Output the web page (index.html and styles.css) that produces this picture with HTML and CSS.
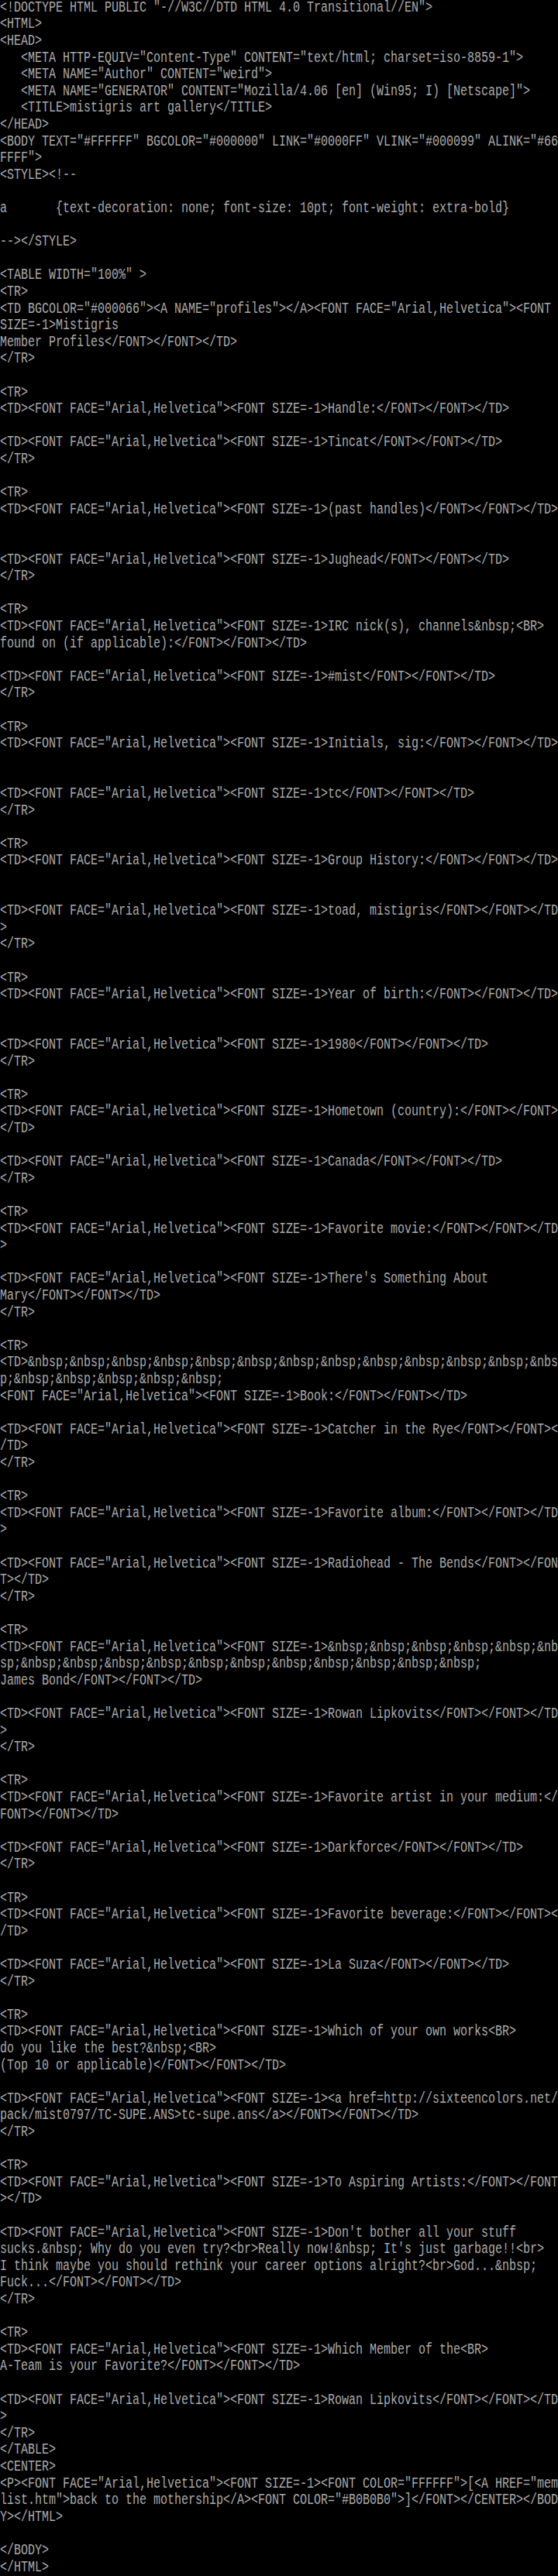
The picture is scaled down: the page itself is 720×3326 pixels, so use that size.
FILE: index.html
```html
<!DOCTYPE html>
<html lang="en">
<head>
  <meta charset="utf-8">
  <title>mistigris art gallery - source</title>
  <link rel="stylesheet" href="styles.css">
</head>
<body>
<!-- 80 colonnes x 154 lignes, comme l'écran texte d'origine -->
<div class="page">
<pre class="screen">
&lt;!DOCTYPE HTML PUBLIC "-//W3C//DTD HTML 4.0 Transitional//EN"&gt;
&lt;HTML&gt;
&lt;HEAD&gt;
   &lt;META HTTP-EQUIV="Content-Type" CONTENT="text/html; charset=iso-8859-1"&gt;
   &lt;META NAME="Author" CONTENT="weird"&gt;
   &lt;META NAME="GENERATOR" CONTENT="Mozilla/4.06 [en] (Win95; I) [Netscape]"&gt;
   &lt;TITLE&gt;mistigris art gallery&lt;/TITLE&gt;
&lt;/HEAD&gt;
&lt;BODY TEXT="#FFFFFF" BGCOLOR="#000000" LINK="#0000FF" VLINK="#000099" ALINK="#66
FFFF"&gt;
&lt;STYLE&gt;&lt;!--

a       {text-decoration: none; font-size: 10pt; font-weight: extra-bold}

--&gt;&lt;/STYLE&gt;

&lt;TABLE WIDTH="100%" &gt;
&lt;TR&gt;
&lt;TD BGCOLOR="#000066"&gt;&lt;A NAME="profiles"&gt;&lt;/A&gt;&lt;FONT FACE="Arial,Helvetica"&gt;&lt;FONT
SIZE=-1&gt;Mistigris
Member Profiles&lt;/FONT&gt;&lt;/FONT&gt;&lt;/TD&gt;
&lt;/TR&gt;

&lt;TR&gt;
&lt;TD&gt;&lt;FONT FACE="Arial,Helvetica"&gt;&lt;FONT SIZE=-1&gt;Handle:&lt;/FONT&gt;&lt;/FONT&gt;&lt;/TD&gt;

&lt;TD&gt;&lt;FONT FACE="Arial,Helvetica"&gt;&lt;FONT SIZE=-1&gt;Tincat&lt;/FONT&gt;&lt;/FONT&gt;&lt;/TD&gt;
&lt;/TR&gt;

&lt;TR&gt;
&lt;TD&gt;&lt;FONT FACE="Arial,Helvetica"&gt;&lt;FONT SIZE=-1&gt;(past handles)&lt;/FONT&gt;&lt;/FONT&gt;&lt;/TD&gt;


&lt;TD&gt;&lt;FONT FACE="Arial,Helvetica"&gt;&lt;FONT SIZE=-1&gt;Jughead&lt;/FONT&gt;&lt;/FONT&gt;&lt;/TD&gt;
&lt;/TR&gt;

&lt;TR&gt;
&lt;TD&gt;&lt;FONT FACE="Arial,Helvetica"&gt;&lt;FONT SIZE=-1&gt;IRC nick(s), channels&amp;nbsp;&lt;BR&gt;
found on (if applicable):&lt;/FONT&gt;&lt;/FONT&gt;&lt;/TD&gt;

&lt;TD&gt;&lt;FONT FACE="Arial,Helvetica"&gt;&lt;FONT SIZE=-1&gt;#mist&lt;/FONT&gt;&lt;/FONT&gt;&lt;/TD&gt;
&lt;/TR&gt;

&lt;TR&gt;
&lt;TD&gt;&lt;FONT FACE="Arial,Helvetica"&gt;&lt;FONT SIZE=-1&gt;Initials, sig:&lt;/FONT&gt;&lt;/FONT&gt;&lt;/TD&gt;


&lt;TD&gt;&lt;FONT FACE="Arial,Helvetica"&gt;&lt;FONT SIZE=-1&gt;tc&lt;/FONT&gt;&lt;/FONT&gt;&lt;/TD&gt;
&lt;/TR&gt;

&lt;TR&gt;
&lt;TD&gt;&lt;FONT FACE="Arial,Helvetica"&gt;&lt;FONT SIZE=-1&gt;Group History:&lt;/FONT&gt;&lt;/FONT&gt;&lt;/TD&gt;


&lt;TD&gt;&lt;FONT FACE="Arial,Helvetica"&gt;&lt;FONT SIZE=-1&gt;toad, mistigris&lt;/FONT&gt;&lt;/FONT&gt;&lt;/TD
&gt;
&lt;/TR&gt;

&lt;TR&gt;
&lt;TD&gt;&lt;FONT FACE="Arial,Helvetica"&gt;&lt;FONT SIZE=-1&gt;Year of birth:&lt;/FONT&gt;&lt;/FONT&gt;&lt;/TD&gt;


&lt;TD&gt;&lt;FONT FACE="Arial,Helvetica"&gt;&lt;FONT SIZE=-1&gt;1980&lt;/FONT&gt;&lt;/FONT&gt;&lt;/TD&gt;
&lt;/TR&gt;

&lt;TR&gt;
&lt;TD&gt;&lt;FONT FACE="Arial,Helvetica"&gt;&lt;FONT SIZE=-1&gt;Hometown (country):&lt;/FONT&gt;&lt;/FONT&gt;
&lt;/TD&gt;

&lt;TD&gt;&lt;FONT FACE="Arial,Helvetica"&gt;&lt;FONT SIZE=-1&gt;Canada&lt;/FONT&gt;&lt;/FONT&gt;&lt;/TD&gt;
&lt;/TR&gt;

&lt;TR&gt;
&lt;TD&gt;&lt;FONT FACE="Arial,Helvetica"&gt;&lt;FONT SIZE=-1&gt;Favorite movie:&lt;/FONT&gt;&lt;/FONT&gt;&lt;/TD
&gt;

&lt;TD&gt;&lt;FONT FACE="Arial,Helvetica"&gt;&lt;FONT SIZE=-1&gt;There's Something About
Mary&lt;/FONT&gt;&lt;/FONT&gt;&lt;/TD&gt;
&lt;/TR&gt;

&lt;TR&gt;
&lt;TD&gt;&amp;nbsp;&amp;nbsp;&amp;nbsp;&amp;nbsp;&amp;nbsp;&amp;nbsp;&amp;nbsp;&amp;nbsp;&amp;nbsp;&amp;nbsp;&amp;nbsp;&amp;nbsp;&amp;nbs
p;&amp;nbsp;&amp;nbsp;&amp;nbsp;&amp;nbsp;&amp;nbsp;
&lt;FONT FACE="Arial,Helvetica"&gt;&lt;FONT SIZE=-1&gt;Book:&lt;/FONT&gt;&lt;/FONT&gt;&lt;/TD&gt;

&lt;TD&gt;&lt;FONT FACE="Arial,Helvetica"&gt;&lt;FONT SIZE=-1&gt;Catcher in the Rye&lt;/FONT&gt;&lt;/FONT&gt;&lt;
/TD&gt;
&lt;/TR&gt;

&lt;TR&gt;
&lt;TD&gt;&lt;FONT FACE="Arial,Helvetica"&gt;&lt;FONT SIZE=-1&gt;Favorite album:&lt;/FONT&gt;&lt;/FONT&gt;&lt;/TD
&gt;

&lt;TD&gt;&lt;FONT FACE="Arial,Helvetica"&gt;&lt;FONT SIZE=-1&gt;Radiohead - The Bends&lt;/FONT&gt;&lt;/FON
T&gt;&lt;/TD&gt;
&lt;/TR&gt;

&lt;TR&gt;
&lt;TD&gt;&lt;FONT FACE="Arial,Helvetica"&gt;&lt;FONT SIZE=-1&gt;&amp;nbsp;&amp;nbsp;&amp;nbsp;&amp;nbsp;&amp;nbsp;&amp;nb
sp;&amp;nbsp;&amp;nbsp;&amp;nbsp;&amp;nbsp;&amp;nbsp;&amp;nbsp;&amp;nbsp;&amp;nbsp;&amp;nbsp;&amp;nbsp;&amp;nbsp;
James Bond&lt;/FONT&gt;&lt;/FONT&gt;&lt;/TD&gt;

&lt;TD&gt;&lt;FONT FACE="Arial,Helvetica"&gt;&lt;FONT SIZE=-1&gt;Rowan Lipkovits&lt;/FONT&gt;&lt;/FONT&gt;&lt;/TD
&gt;
&lt;/TR&gt;

&lt;TR&gt;
&lt;TD&gt;&lt;FONT FACE="Arial,Helvetica"&gt;&lt;FONT SIZE=-1&gt;Favorite artist in your medium:&lt;/
FONT&gt;&lt;/FONT&gt;&lt;/TD&gt;

&lt;TD&gt;&lt;FONT FACE="Arial,Helvetica"&gt;&lt;FONT SIZE=-1&gt;Darkforce&lt;/FONT&gt;&lt;/FONT&gt;&lt;/TD&gt;
&lt;/TR&gt;

&lt;TR&gt;
&lt;TD&gt;&lt;FONT FACE="Arial,Helvetica"&gt;&lt;FONT SIZE=-1&gt;Favorite beverage:&lt;/FONT&gt;&lt;/FONT&gt;&lt;
/TD&gt;

&lt;TD&gt;&lt;FONT FACE="Arial,Helvetica"&gt;&lt;FONT SIZE=-1&gt;La Suza&lt;/FONT&gt;&lt;/FONT&gt;&lt;/TD&gt;
&lt;/TR&gt;

&lt;TR&gt;
&lt;TD&gt;&lt;FONT FACE="Arial,Helvetica"&gt;&lt;FONT SIZE=-1&gt;Which of your own works&lt;BR&gt;
do you like the best?&amp;nbsp;&lt;BR&gt;
(Top 10 or applicable)&lt;/FONT&gt;&lt;/FONT&gt;&lt;/TD&gt;

&lt;TD&gt;&lt;FONT FACE="Arial,Helvetica"&gt;&lt;FONT SIZE=-1&gt;&lt;a href=http://sixteencolors.net/
pack/mist0797/TC-SUPE.ANS&gt;tc-supe.ans&lt;/a&gt;&lt;/FONT&gt;&lt;/FONT&gt;&lt;/TD&gt;
&lt;/TR&gt;

&lt;TR&gt;
&lt;TD&gt;&lt;FONT FACE="Arial,Helvetica"&gt;&lt;FONT SIZE=-1&gt;To Aspiring Artists:&lt;/FONT&gt;&lt;/FONT
&gt;&lt;/TD&gt;

&lt;TD&gt;&lt;FONT FACE="Arial,Helvetica"&gt;&lt;FONT SIZE=-1&gt;Don't bother all your stuff
sucks.&amp;nbsp; Why do you even try?&lt;br&gt;Really now!&amp;nbsp; It's just garbage!!&lt;br&gt;
I think maybe you should rethink your career options alright?&lt;br&gt;God...&amp;nbsp;
Fuck...&lt;/FONT&gt;&lt;/FONT&gt;&lt;/TD&gt;
&lt;/TR&gt;

&lt;TR&gt;
&lt;TD&gt;&lt;FONT FACE="Arial,Helvetica"&gt;&lt;FONT SIZE=-1&gt;Which Member of the&lt;BR&gt;
A-Team is your Favorite?&lt;/FONT&gt;&lt;/FONT&gt;&lt;/TD&gt;

&lt;TD&gt;&lt;FONT FACE="Arial,Helvetica"&gt;&lt;FONT SIZE=-1&gt;Rowan Lipkovits&lt;/FONT&gt;&lt;/FONT&gt;&lt;/TD
&gt;
&lt;/TR&gt;
&lt;/TABLE&gt;
&lt;CENTER&gt;
&lt;P&gt;&lt;FONT FACE="Arial,Helvetica"&gt;&lt;FONT SIZE=-1&gt;&lt;FONT COLOR="FFFFFF"&gt;[&lt;A HREF="mem
list.htm"&gt;back to the mothership&lt;/A&gt;&lt;FONT COLOR="#B0B0B0"&gt;]&lt;/FONT&gt;&lt;/CENTER&gt;&lt;/BOD
Y&gt;&lt;/HTML&gt;

&lt;/BODY&gt;
&lt;/HTML&gt;
</pre>
</div>
</body>
</html>
```

FILE: styles.css
```css
/* Fond noir, texte gris clair façon écran VGA */
html {
  background-color: #000;
}

body {
  margin: 0;
  padding: 0;
  background-color: #000;
  color: #aaa;
}

/* Hauteur réelle de l'écran une fois étiré : 154 lignes x 21.6px */
.page {
  height: 3326px;
  overflow: hidden;
}

/* Ecran texte : 80 colonnes de 9px, lignes de 16px étirées à 21.6px */
.screen {
  margin: 0;
  font-family: "Liberation Mono", "DejaVu Sans Mono", monospace;
  font-size: 15px;
  line-height: 16px;
  white-space: pre;
  transform: scaleY(1.35);
  transform-origin: 0 0;
}
```
